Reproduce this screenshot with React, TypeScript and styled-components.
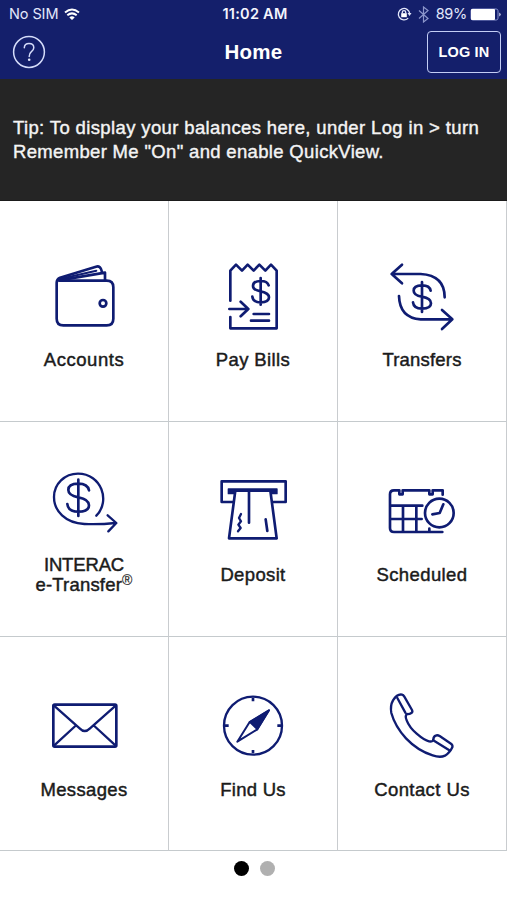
import React from "react";
import styled, { createGlobalStyle } from "styled-components";

const NAVY = "#141f6b";
const INK = "#0f1c72";

const GlobalStyle = createGlobalStyle`
  *, *::before, *::after { box-sizing: border-box; }
  html, body { margin: 0; padding: 0; background: #fff; }
  body { font-family: "Liberation Sans", Arial, Helvetica, sans-serif; overflow: hidden; }
`;

const Screen = styled.main`
  width: 507px;
  height: 900px;
  display: flex;
  flex-direction: column;
  background: #fff;
  overflow: hidden;
`;

const StatusBar = styled.div`
  height: 27px;
  flex: none;
  display: grid;
  grid-template-columns: 1fr auto 1fr;
  align-items: center;
  padding: 1px 6px 0 9px;
  background: ${NAVY};
  color: #e3e7fb;
  font-family: Inter, "Liberation Sans", sans-serif;
`;

const StatusGroup = styled.div<{ $end?: boolean }>`
  display: flex;
  align-items: center;
  justify-content: ${(p) => (p.$end ? "flex-end" : "flex-start")};
`;

const StatusText = styled.span<{ $track: number }>`
  font-size: 14.5px;
  letter-spacing: ${(p) => p.$track}px;
  line-height: 20px;
  white-space: nowrap;
`;

const Clock = styled.span`
  font-size: 14.5px;
  font-weight: 600;
  letter-spacing: 0.25px;
  line-height: 20px;
  color: #f4f5fd;
  white-space: nowrap;
`;

const WifiIcon = styled.svg`
  width: 16px;
  height: 13px;
  margin-left: 6px;
`;

const LockIcon = styled.svg`
  width: 15px;
  height: 14px;
  margin-right: 6px;
`;

const BluetoothIcon = styled.svg`
  width: 11px;
  height: 17px;
  margin-right: 7px;
`;

const BatteryIcon = styled.svg`
  width: 31px;
  height: 13px;
  margin-left: 3px;
`;

const Header = styled.header`
  height: 52px;
  flex: none;
  display: grid;
  grid-template-columns: 1fr auto 1fr;
  align-items: center;
  padding: 0 6px 2px 12px;
  background: ${NAVY};
  color: #fff;
`;

const HelpButton = styled.button`
  width: 34px;
  height: 34px;
  padding: 0;
  border: 0;
  background: none;
  svg { display: block; }
`;

const Title = styled.h1`
  margin: 0 6px 0 0;
  font-size: 20.5px;
  line-height: 24px;
  font-weight: 700;
  letter-spacing: 0.25px;
`;

const LoginButton = styled.button`
  justify-self: end;
  width: 74px;
  height: 42px;
  padding: 0 0 1px;
  border: 1.5px solid #c3cdf5;
  border-radius: 4px;
  background: none;
  color: #fff;
  font: 700 14.5px/20px "Liberation Sans", Arial, sans-serif;
  letter-spacing: 0.15px;
  white-space: nowrap;
`;

const Tip = styled.section`
  height: 122px;
  flex: none;
  padding: 37px 13px 0;
  background: #252525;
  border-bottom: 1px solid #1b1b1b;
  color: #f4f4f4;
  font-size: 18.5px;
  line-height: 24px;
  -webkit-text-stroke: 0.4px #f4f4f4;
`;

const TipLine = styled.div<{ $track: number }>`
  letter-spacing: ${(p) => p.$track}px;
  white-space: nowrap;
`;

const Grid = styled.nav`
  flex: none;
  display: grid;
  grid-template-columns: 169px 169px 169px;
  grid-template-rows: 221px 215px 214px;
`;

const Cell = styled.a<{ $top: number; $gap: number }>`
  display: flex;
  flex-direction: column;
  align-items: center;
  padding-top: ${(p) => p.$top}px;
  gap: ${(p) => p.$gap}px;
  border-right: 1px solid #c9cccf;
  border-bottom: 1px solid #c5cacd;
  color: #1b1b1b;
`;

const TileIcon = styled.svg`
  width: 80px;
  height: 80px;
  flex: none;
  fill: none;
  stroke: ${INK};
  stroke-width: 8;
  stroke-linecap: round;
  stroke-linejoin: round;
`;

const Label = styled.span`
  height: 40px;
  display: flex;
  flex-direction: column;
  justify-content: center;
  align-items: center;
  font-size: 18.5px;
  -webkit-text-stroke: 0.45px #1b1b1b;
`;

const LabelLine = styled.span<{ $track: number }>`
  line-height: 20px;
  letter-spacing: ${(p) => p.$track}px;
  white-space: nowrap;
`;

const Mark = styled.sup`
  font-size: 14px;
  line-height: 0;
  vertical-align: 6px;
  -webkit-text-stroke-width: 0.15px;
`;

const Pager = styled.div`
  display: flex;
  justify-content: center;
  gap: 11px;
  padding: 10px 0 0 1px;
`;

const Dot = styled.span<{ $on?: boolean }>`
  width: 15px;
  height: 15px;
  border-radius: 50%;
  background: ${(p) => (p.$on ? "#000" : "#b0b0b0")};
`;

type Line = { text: string; track: number; mark?: boolean };
type Tile = { lines: Line[]; view: string; art: React.ReactNode };

const tiles: Tile[] = [
  {
    lines: [{ text: "Accounts", track: 0.55 }],
    view: "43 21 240 240",
    art: (
      <>
        <path d="M90 92H231Q251 92 251 112V206Q251 226 231 226H101Q81 226 81 206V98Q81 87 91 83L199 50Q213 46 217 66" />
        <path d="M88 91L226 68V91" />
        <path d="M94 86L200 62" strokeWidth="6" />
        <circle cx="220" cy="160" r="10" />
      </>
    ),
  },
  {
    lines: [{ text: "Pay Bills", track: 0.4 }],
    view: "40 21 240 240",
    art: (
      <>
        <path d="M92 152V62L109 44L127 62L144 44L162 62L179 44L197 62L214 44L231 62V235H92V201" />
        <path d="M89 177H145M123 155L146 177L123 199M162 192H208M154 212H208" />
        <path d="M183 84V164M207 106Q203 93 183 93Q160 93 160 108Q160 120 183 124Q208 129 208 142Q208 157 183 157Q160 157 158 140" />
      </>
    ),
  },
  {
    lines: [{ text: "Transfers", track: 0.2 }],
    view: "37 21 240 240",
    art: (
      <>
        <path d="M97 44L66 72L97 100M66 72H153Q225 76 225 142" />
        <path d="M217 180L248 208L217 237M248 208H153Q90 204 88 138" />
        <path d="M157 96V186M183 122Q180 106 157 106Q132 106 132 122Q132 136 157 140Q184 145 184 160Q184 176 157 176Q132 176 130 157" />
      </>
    ),
  },
  {
    lines: [
      { text: "INTERAC", track: -0.15 },
      { text: "e-Transfer", track: 0.2, mark: true },
    ],
    view: "43 30 240 240",
    art: (
      <>
        <path d="M200 167C243 124 216 41 145 41C105 41 73 72 73 111C73 153 107 189 164 192Q210 194 257 189M234 166L260 189L236 214" strokeWidth="7" />
        <path d="M146 59V168M178 91Q174 71 146 71Q116 71 116 90Q116 106 146 112Q178 118 178 136Q178 155 146 155Q115 155 113 132" />
      </>
    ),
  },
  {
    lines: [{ text: "Deposit", track: 0.35 }],
    view: "40 30 240 240",
    art: (
      <>
        <path d="M103 126H66V64H258V126H216" />
        <path d="M86 87H232V101H86Z" strokeWidth="4" fill={INK} />
        <path d="M107 92H212L231 235H88Z" fill="#fff" />
        <path d="M148 92V188M198 178L203 213" />
        <path d="M124 162L118 174L124 184L116 194L123 204L115 214" strokeWidth="7" />
      </>
    ),
  },
  {
    lines: [{ text: "Scheduled", track: 0.4 }],
    view: "37 30 240 240",
    art: (
      <>
        <path d="M219 104V91H189V103H179V91H99V103H89V91H73Q61 91 61 103V204Q61 216 73 216H218M179 216V206" />
        <path d="M64 137H158M64 177H156M100 138V215M140 138V215" />
        <circle cx="209" cy="159" r="43" />
        <path d="M221 133L210 159L188 163" />
      </>
    ),
  },
  {
    lines: [{ text: "Messages", track: 0.35 }],
    view: "43 18 240 240",
    art: (
      <>
        <rect x="71" y="74" width="189" height="126" rx="4" />
        <path d="M73 77L150 145Q165 161 181 145L258 77M73 197L137 138M258 197L194 138" strokeWidth="7" />
      </>
    ),
  },
  {
    lines: [{ text: "Find Us", track: 0.25 }],
    view: "40 18 240 240",
    art: (
      <>
        <circle cx="160" cy="137" r="87" strokeWidth="7" />
        <path d="M160 53V64M160 210V220M76 137H87M233 137H244" strokeLinecap="butt" />
        <path d="M208 91L150 126L113 185L173 148Z" strokeWidth="6" />
        <path d="M208 91L150 126L173 148Z" strokeWidth="5" fill={INK} />
      </>
    ),
  },
  {
    lines: [{ text: "Contact Us", track: 0.42 }],
    view: "37 18 240 240",
    art: (
      <g strokeWidth="7">
        <path d="M70 61Q83 41 97 44Q101 45 104 50L127 90Q130 96 125 99Q119 103 112 102Q105 108 111 121Q119 142 141 161Q164 181 178 184Q190 186 191 179Q191 170 198 167Q203 164 210 168L244 191Q250 195 248 202Q240 219 226 227Q211 234 189 226Q144 212 109 175Q76 139 65 99Q61 77 70 61Z" />
        <path d="M83 54L107 98M193 182L239 211" />
      </g>
    ),
  },
];

const rowMetrics = [
  { top: 56, gap: 3 },
  { top: 48, gap: 5 },
  { top: 49, gap: 4 },
];

export default function App() {
  return (
    <>
      <GlobalStyle />
      <Screen>
        <StatusBar>
          <StatusGroup>
            <StatusText $track={-0.1}>No SIM</StatusText>
            <WifiIcon viewBox="0 0 16 13" fill="none" stroke="#fff" strokeWidth="2">
              <path d="M1 4.4Q8-1.4 15 4.4M3.3 7.3Q8 3.4 12.7 7.3" />
              <path d="M8 12L5.3 9.4Q8 7.3 10.7 9.4Z" fill="#fff" stroke="none" />
            </WifiIcon>
          </StatusGroup>
          <Clock>11:02 AM</Clock>
          <StatusGroup $end>
            <LockIcon viewBox="0 0 15 14" fill="none" stroke="#e3e7fb" strokeWidth="1.3">
              <path d="M11.2 11.1A5.7 5.7 0 1 1 12.7 6.5" />
              <path d="M10.5 6L14.5 6L12.5 9Z" fill="#e3e7fb" stroke="none" />
              <rect x="4.2" y="6.2" width="5.6" height="4" fill="#fff" stroke="none" />
              <path d="M5.3 6.5V5.2Q5.3 3.7 7 3.7Q8.7 3.7 8.7 5.2V6.5" />
            </LockIcon>
            <BluetoothIcon viewBox="0 0 11 17" fill="none" stroke="#8c96cb" strokeWidth="1.2">
              <path d="M1 4.5L10 12.5L5.5 16V1L10 4.5L1 12.5" />
            </BluetoothIcon>
            <StatusText $track={-0.3}>89%</StatusText>
            <BatteryIcon viewBox="0 0 31 13">
              <rect x="1" y="1" width="27" height="11" rx="1.8" fill="none" stroke="#8791cc" />
              <rect x="1" y="1" width="24" height="11" rx="1" fill="#fff" />
              <path d="M29.3 4.5Q32 6.5 29.3 8.5Z" fill="#dfe3fa" />
            </BatteryIcon>
          </StatusGroup>
        </StatusBar>

        <Header>
          <HelpButton aria-label="Help">
            <svg width="34" height="34" viewBox="0 0 34 34" fill="none" stroke="#d5dcfa" strokeWidth="1.5">
              <circle cx="17" cy="17" r="15.4" />
              <path d="M12.3 12.8Q12.5 8.6 17 8.6Q21.8 8.6 21.8 12.8Q21.8 15 19.2 16.9Q17.2 18.4 17.2 21.5" strokeLinecap="round" />
              <circle cx="17.2" cy="24.8" r="1.3" fill="#e3e7fb" stroke="none" />
            </svg>
          </HelpButton>
          <Title>Home</Title>
          <LoginButton>LOG IN</LoginButton>
        </Header>

        <Tip>
          <TipLine $track={0.37}>Tip: To display your balances here, under Log in &gt; turn</TipLine>
          <TipLine $track={0.33}>Remember Me "On" and enable QuickView.</TipLine>
        </Tip>

        <Grid>
          {tiles.map((tile, i) => {
            const m = rowMetrics[Math.floor(i / 3)];
            return (
              <Cell key={tile.lines[0].text} $top={m.top} $gap={m.gap}>
                <TileIcon viewBox={tile.view}>{tile.art}</TileIcon>
                <Label>
                  {tile.lines.map((line) => (
                    <LabelLine key={line.text} $track={line.track}>
                      {line.text}
                      {line.mark && <Mark>®</Mark>}
                    </LabelLine>
                  ))}
                </Label>
              </Cell>
            );
          })}
        </Grid>

        <Pager>
          <Dot $on />
          <Dot />
        </Pager>
      </Screen>
    </>
  );
}
